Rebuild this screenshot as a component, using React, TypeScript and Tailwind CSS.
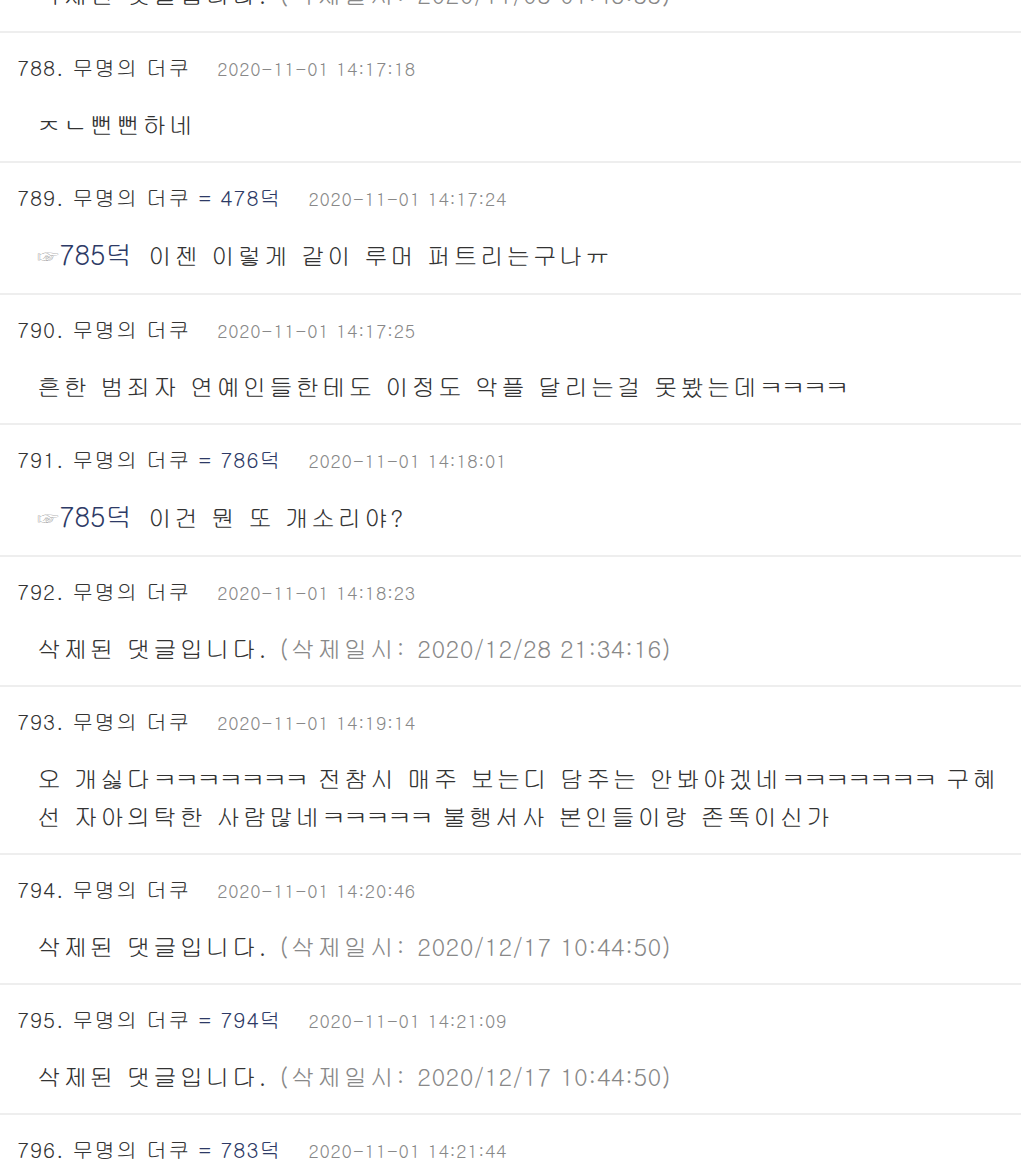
const font = "font-['Gulim','Noto_Sans_CJK_KR',sans-serif]";

type Item = {
  no: number;
  reply?: number;
  date: string;
  body?: string;
  anchor?: number;
  deleted?: string;
};

const items: Item[] = [
  { no: 787, date: "2020-11-01 14:16:40", deleted: "2020/11/05 01:46:55" },
  { no: 788, date: "2020-11-01 14:17:18", body: "ㅈㄴ뻔뻔하네" },
  { no: 789, reply: 478, date: "2020-11-01 14:17:24", anchor: 785, body: " 이젠 이렇게 같이 루머 퍼트리는구나ㅠ" },
  { no: 790, date: "2020-11-01 14:17:25", body: "흔한 범죄자 연예인들한테도 이정도 악플 달리는걸 못봤는데ㅋㅋㅋㅋ" },
  { no: 791, reply: 786, date: "2020-11-01 14:18:01", anchor: 785, body: " 이건 뭔 또 개소리야?" },
  { no: 792, date: "2020-11-01 14:18:23", deleted: "2020/12/28 21:34:16" },
  {
    no: 793,
    date: "2020-11-01 14:19:14",
    body: "오 개싫다ㅋㅋㅋㅋㅋㅋㅋ 전참시 매주 보는디 담주는 안봐야겠네ㅋㅋㅋㅋㅋㅋㅋ 구혜선 자아의탁한 사람많네ㅋㅋㅋㅋㅋ 불행서사 본인들이랑 존똑이신가",
  },
  { no: 794, date: "2020-11-01 14:20:46", deleted: "2020/12/17 10:44:50" },
  { no: 795, reply: 794, date: "2020-11-01 14:21:09", deleted: "2020/12/17 10:44:50" },
  { no: 796, reply: 783, date: "2020-11-01 14:21:44", body: "..." },
];

// ㅋ glyphs are narrower in the original font, tighten them
function Body({ text }: { text: string }) {
  const parts = text.split(/(ㅋ+)/);
  return (
    <>
      {parts.map((p, i) =>
        p.startsWith("ㅋ") ? (
          <span key={i} className="tracking-[-2px]">
            {p}
          </span>
        ) : (
          <span key={i}>{p}</span>
        )
      )}
    </>
  );
}

function Comment({ item }: { item: Item }) {
  return (
    <div className="border-b-2 border-[#eeeeee] pt-[23px] pb-[18px]">
      <div className="flex items-baseline pl-[17px] h-[22px]">
        <span className="text-[21px] leading-[22px] tracking-[1px] text-[#333333]">
          {item.no}. 무명의 더쿠
          {item.reply && <span className="text-[#2d3a66]"> = {item.reply}덕</span>}
        </span>
        <span className="ml-[27px] text-[18px] leading-[22px] tracking-[0.7px] text-[#888888]">{item.date}</span>
      </div>
      <div className="mt-[27px] pl-[37px] pr-[16px] text-[24px] leading-[38px] tracking-[2.4px] text-[#333333] break-all">
        {item.deleted ? (
          <>
            삭제된 댓글입니다. <span className="text-[#888888]">(삭제일시: <span className="tracking-[0.4px]">{item.deleted})</span></span>
          </>
        ) : (
          <>
            {item.anchor && (
              <span className="text-[#2d3a66] text-[27px] tracking-normal">
                <span className="text-[#777777] text-[22px]">☞</span>
                {item.anchor}덕
              </span>
            )}
            {item.anchor && <span className="inline-block w-[5px]" />}
            <Body text={item.body ?? ""} />
          </>
        )}
      </div>
    </div>
  );
}

export default function App() {
  return (
    <div className={`${font} bg-white w-[1021px] h-[1172px] overflow-hidden`}>
      <div className="-mt-[97px]">
        {items.map((it) => (
          <Comment key={it.no} item={it} />
        ))}
      </div>
    </div>
  );
}
